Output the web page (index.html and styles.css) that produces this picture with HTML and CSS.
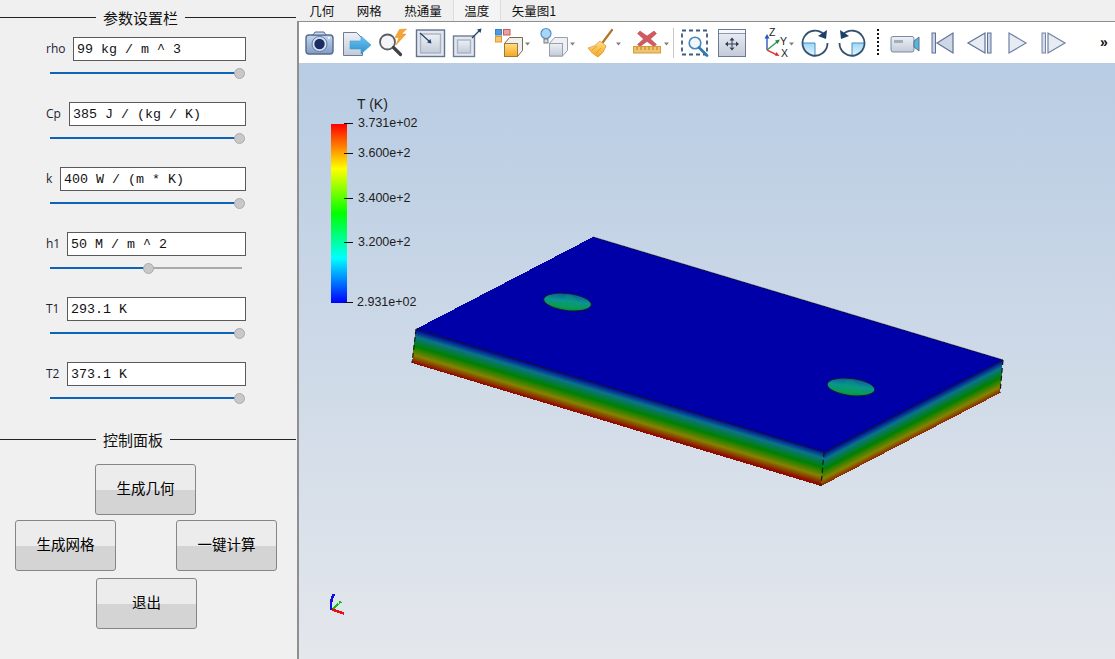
FILE: index.html
```html
<!DOCTYPE html>
<html lang="zh">
<head>
<meta charset="utf-8">
<title>参数设置</title>
<link rel="stylesheet" href="styles.css">
</head>
<body>
<div class="app">
  <aside class="panel">
    <div class="group-title"><span class="rule rule-start"></span><span>参数设置栏</span><span class="rule"></span></div>
    <div class="params">
      <div class="param">
        <div class="field"><label class="lbl lbl-rho">rho</label><div class="input">99 kg / m ^ 3</div></div>
        <div class="slider"><div class="fill" style="width:189px"></div><div class="knob" style="left:184px"></div></div>
      </div>
      <div class="param">
        <div class="field"><label class="lbl lbl-cp">Cp</label><div class="input">385 J / (kg / K)</div></div>
        <div class="slider"><div class="fill" style="width:189px"></div><div class="knob" style="left:184px"></div></div>
      </div>
      <div class="param">
        <div class="field"><label class="lbl lbl-k">k</label><div class="input">400 W / (m * K)</div></div>
        <div class="slider"><div class="fill" style="width:189px"></div><div class="knob" style="left:184px"></div></div>
      </div>
      <div class="param">
        <div class="field"><label class="lbl lbl-t">h1</label><div class="input">50 M / m ^ 2</div></div>
        <div class="slider"><div class="fill" style="width:99px"></div><div class="knob" style="left:93px"></div></div>
      </div>
      <div class="param">
        <div class="field"><label class="lbl lbl-t">T1</label><div class="input">293.1 K</div></div>
        <div class="slider"><div class="fill" style="width:189px"></div><div class="knob" style="left:184px"></div></div>
      </div>
      <div class="param">
        <div class="field"><label class="lbl lbl-t">T2</label><div class="input">373.1 K</div></div>
        <div class="slider"><div class="fill" style="width:189px"></div><div class="knob" style="left:184px"></div></div>
      </div>
    </div>
    <div class="group-title second"><span class="rule rule-start"></span><span>控制面板</span><span class="rule"></span></div>
    <div class="controls">
      <div class="btn-row row-a"><button class="btn">生成几何</button></div>
      <div class="btn-row row-b"><button class="btn">生成网格</button><button class="btn">一键计算</button></div>
      <div class="btn-row row-c"><button class="btn">退出</button></div>
    </div>
  </aside>
  <main class="work">
    <nav class="tabs">
      <span class="tab">几何</span><span class="tab">网格</span><span class="tab">热通量</span><span class="tab active">温度</span><span class="tab">矢量图1</span>
    </nav>
    <div class="side">
      <div class="toolbar">
        <svg width="41" height="41" viewBox="299 22 41 41">
          <defs>
            <linearGradient id="gFrame" x1="0" y1="0" x2="0" y2="1"><stop offset="0" stop-color="#eef1f5"/><stop offset="1" stop-color="#c3cbd8"/></linearGradient>
            <linearGradient id="gCam" x1="0" y1="0" x2="0" y2="1"><stop offset="0" stop-color="#c3d6ee"/><stop offset="1" stop-color="#7f9cc6"/></linearGradient>
            <linearGradient id="gArrow" x1="0" y1="0" x2="0" y2="1"><stop offset="0" stop-color="#6fc4ee"/><stop offset="1" stop-color="#2b8fd0"/></linearGradient>
            <linearGradient id="gOrange" x1="0" y1="0" x2="0" y2="1"><stop offset="0" stop-color="#ffdf85"/><stop offset="1" stop-color="#f5a623"/></linearGradient>
            <linearGradient id="gWedge" x1="0" y1="0" x2="0" y2="1"><stop offset="0" stop-color="#9fd6f5"/><stop offset="1" stop-color="#e2f3fc"/></linearGradient>
          </defs>
          <rect x="306" y="35" width="27" height="19" rx="3" fill="url(#gCam)" stroke="#56698f" stroke-width="1.4"/>
          <path d="M313 35l2-3h9l2 3z" fill="#c3d6ee" stroke="#56698f"/>
          <circle cx="319.5" cy="44" r="7.5" fill="#d7e3f2" stroke="#64799f"/>
          <circle cx="319.5" cy="44" r="5.2" fill="#1c2d63"/>
          <circle cx="329" cy="38" r="1" fill="#fff"/>
        </svg>
        <svg width="35" height="41" viewBox="340 22 35 41">
          <path d="M343.500 32.500h13l6 6v17h-19z" fill="url(#gFrame)" stroke="#6d7b97"/>
          <path d="M350 41h11v-5l10 9-10 9v-5h-11z" fill="url(#gArrow)" stroke="#3d9fd8" stroke-width=".6"/>
        </svg>
        <svg width="37" height="41" viewBox="375 22 37 41">
          <circle cx="387.500" cy="42" r="7.500" fill="#f3f5f8" stroke="#5b5f66" stroke-width="1.800"/>
          <path d="M393.500 47.500l7 7" stroke="#3f4348" stroke-width="3.200" stroke-linecap="round"/>
          <path d="M406.500 29l-7 .5-4.500 8h4l-3 7.500 10-11h-4.500z" fill="#f5a533" stroke="#e68a1c" stroke-width=".5"/>
        </svg>
        <svg width="37" height="41" viewBox="412 22 37 41">
          <rect x="416.500" y="30" width="28" height="26.500" fill="#e3e7ee" stroke="#62738f" stroke-width="1.400"/>
          <rect x="420.500" y="34" width="20" height="19" fill="url(#gFrame)" stroke="#a9b3c3" stroke-width="1.400"/>
          <path d="M420 33l10 9" stroke="#25406f" stroke-width="1.200"/>
          <path d="M431.500 43.500l-4.500-1 3.500-3.500z" fill="#25406f"/>
        </svg>
        <svg width="41" height="41" viewBox="449 22 41 41">
          <rect x="453.500" y="36" width="21" height="20.500" fill="#e3e7ee" stroke="#6d7d99" stroke-width="1.400"/>
          <rect x="457.500" y="40" width="13" height="13" fill="url(#gFrame)" stroke="#a9b3c3" stroke-width="1.400"/>
          <path d="M472 38l7-7" stroke="#25406f" stroke-width="1.200"/>
          <path d="M481.500 28.500l-1 4.500-3.500-3.500z" fill="#25406f"/>
        </svg>
        <svg width="47" height="41" viewBox="490 22 47 41">
          <rect x="495.500" y="29.500" width="6" height="5.500" fill="#4b9be0" stroke="#3c7fc0"/>
          <rect x="503.500" y="29.500" width="6.500" height="5.500" fill="#e9a0a0" stroke="#c45b5b"/>
          <rect x="495.500" y="36.500" width="6" height="5.500" fill="#f6c66d" stroke="#e09a2d"/>
          <path d="M504.500 43.500l5-6h13v13l-5 6h-13z" fill="#f0f0f0" stroke="#7d6a4e"/>
          <rect x="504.500" y="43.500" width="13" height="13" fill="url(#gOrange)" stroke="#9c7a3a"/>
          <path d="M525 42.500h5l-2.500 3z" fill="#7f7f7f"/>
        </svg>
        <svg width="47" height="41" viewBox="537 22 47 41">
          <circle cx="546" cy="33.500" r="5" fill="#a8d7f5" stroke="#4d8fc7" stroke-width="1.200"/>
          <rect x="544" y="39" width="4" height="4" fill="#dcdcdc" stroke="#777"/>
          <path d="M549.500 43.500l5-6h13v13l-5 5.500h-13z" fill="#eef0f3" stroke="#98a0ad"/>
          <rect x="549.500" y="43.500" width="13" height="12.500" fill="url(#gFrame)" stroke="#98a0ad"/>
          <path d="M570 42.500h5l-2.500 3z" fill="#7f7f7f"/>
        </svg>
        <svg width="44" height="41" viewBox="584 22 44 41">
          <path d="M612 30l-9 12" stroke="#b5742a" stroke-width="2.200" stroke-linecap="round"/>
          <path d="M600 41l6 5q-2 7-8 11-6-3-10-9 7-1 12-7z" fill="url(#gOrange)" stroke="#d59a35" stroke-width=".8"/>
          <path d="M592 50l5-4M596 53l5-5" stroke="#d59a35" stroke-width=".8"/>
          <path d="M616 42.500h5l-2.500 3z" fill="#7f7f7f"/>
        </svg>
        <svg width="42" height="41" viewBox="628 22 42 41">
          <path d="M640 31l7 5 7-5 2.500 2.500-6 5.500 6 5.500-2.500 2-7-5-7 5-2.500-2 6-5.500-6-5.500z" fill="#cf5a5f" stroke="#b54146" stroke-width=".5"/>
          <rect x="633.500" y="46.500" width="27" height="6.500" fill="#f0c46f" stroke="#d3983a"/>
          <path d="M637 47v3M641 47v3M645 47v3M649 47v3M653 47v3M657 47v3" stroke="#b67d2a"/>
          <path d="M664 42.500h5l-2.500 3z" fill="#7f7f7f"/>
        </svg>
        <div class="sep"></div>
        <svg width="37" height="41" viewBox="677 22 37 41">
          <rect x="682" y="30.500" width="25" height="24" fill="none" stroke="#3e5a85" stroke-width="1.800" stroke-dasharray="4 3"/>
          <circle cx="695" cy="43" r="5.800" fill="#eef5fb" stroke="#4a86ba" stroke-width="1.600"/>
          <path d="M699 47.500l8 8" stroke="#2f79b5" stroke-width="2.800" stroke-linecap="round"/>
        </svg>
        <svg width="41" height="41" viewBox="714 22 41 41">
          <rect x="718.500" y="29.500" width="27" height="27" fill="url(#gFrame)" stroke="#6c7a96"/>
          <rect x="719" y="30" width="26" height="3" fill="#f5f7f9"/>
          <path d="M719 33.500h26" stroke="#8e9ab0"/>
          <path d="M732 37.500l-2.500 3h5zM732 50.500l-2.500-3h5zM725 44l3-2.500v5zM739 44l-3-2.500v5z" fill="#2e3c57"/>
          <path d="M732 40v7M728 44h8" stroke="#2e3c57"/>
        </svg>
        <svg width="44" height="41" viewBox="755 22 44 41" class="axis-ico">
          <path d="M767 50v-13" stroke="#3a66c5" stroke-width="1.500"/><path d="M767 34l-2.500 4.500h5z" fill="#2a55b8"/>
          <path d="M767 50l10-8" stroke="#2f9a58" stroke-width="1.500"/><path d="M780 39.500l-5 1 2.500 3.500z" fill="#21894a"/>
          <path d="M767 50l10 5" stroke="#d84a4a" stroke-width="1.500"/><path d="M779.500 56l-4.500-.5 1.500-3.500z" fill="#d42f2f"/>
          <text x="769" y="36">Z</text><text x="780" y="45">Y</text><text x="781" y="57">X</text>
          <path d="M789 42.500h5l-2.500 3z" fill="#7f7f7f"/>
        </svg>
        <svg width="34" height="41" viewBox="799 22 34 41">
          <path d="M802.500 43H815V55.500A12.500 12.500 0 0 1 802.500 43z" fill="url(#gWedge)"/>
          <path d="M815 43v12.500M802.500 43H815" stroke="#3f90c9"/>
          <path d="M824 34.500A12.500 12.500 0 1 0 827.500 43" fill="none" stroke="#33506f" stroke-width="1.800"/>
          <path d="M827 30l-1 9-8-3z" fill="#1f3e66"/>
        </svg>
        <svg width="39" height="41" viewBox="833 22 39 41">
          <path d="M864 43H852V55.500A12.500 12.500 0 0 0 864 43z" fill="url(#gWedge)"/>
          <path d="M852 43v12.500M864 43H852" stroke="#3f90c9"/>
          <path d="M843 34.500A12.500 12.500 0 1 1 839.500 43" fill="none" stroke="#33506f" stroke-width="1.800"/>
          <path d="M840 30l1 9 8-3z" fill="#1f3e66"/>
        </svg>
        <div class="dots"></div>
        <svg width="41" height="41" viewBox="885 22 41 41">
          <rect x="891" y="36.500" width="23" height="15.500" rx="2" fill="url(#gFrame)" stroke="#7a88a3"/>
          <rect x="894" y="40" width="9" height="3" fill="#a4adba"/>
          <path d="M914 41l5-4v14l-5-4z" fill="#58b6dd" stroke="#5d708f"/>
        </svg>
        <svg width="34" height="41" viewBox="926 22 34 41">
          <rect x="932" y="33" width="3.500" height="20" fill="#c9d3e2" stroke="#5f7299"/>
          <path d="M953 33v20l-16-10z" fill="#cfd7e4" stroke="#5f7299" stroke-width="1.200"/>
        </svg>
        <svg width="40" height="41" viewBox="960 22 40 41">
          <path d="M985 33v20l-17-10z" fill="#e7ecf3" stroke="#5f7299" stroke-width="1.200"/>
          <rect x="987.500" y="33" width="3.500" height="20" fill="#c9d3e2" stroke="#5f7299"/>
        </svg>
        <svg width="35" height="41" viewBox="1000 22 35 41">
          <path d="M1009 33v20l17-10z" fill="#e7ecf3" stroke="#6d80a5" stroke-width="1.200"/>
        </svg>
        <svg width="55" height="41" viewBox="1035 22 55 41">
          <rect x="1042" y="33" width="3.500" height="20" fill="#d5dce7" stroke="#7486a8"/>
          <path d="M1048 33v20l17-10z" fill="#e7ecf3" stroke="#6d80a5" stroke-width="1.200"/>
        </svg>
        <span class="more">»</span>
      </div>
      <div class="viewport">
        <svg class="scene" width="816" height="596" viewBox="299 63 816 596">
          <defs>
            <linearGradient id="cbar" x1="0" y1="0" x2="0" y2="1">
              <stop offset="0" stop-color="#ff0000"/><stop offset=".25" stop-color="#ffff00"/><stop offset=".5" stop-color="#00ff00"/><stop offset=".75" stop-color="#00ffff"/><stop offset="1" stop-color="#0000ff"/>
            </linearGradient>
            <linearGradient id="sideL" gradientUnits="userSpaceOnUse" x1="620" y1="390" x2="610.600" y2="421.600">
              <stop offset="0" stop-color="#00009c"/><stop offset=".22" stop-color="#0a7488"/><stop offset=".5" stop-color="#008000"/><stop offset=".77" stop-color="#868200"/><stop offset="1" stop-color="#8e0c00"/>
            </linearGradient>
            <linearGradient id="sideR" gradientUnits="userSpaceOnUse" x1="913" y1="406" x2="926.900" y2="432.800">
              <stop offset="0" stop-color="#00009c"/><stop offset=".22" stop-color="#0a7488"/><stop offset=".5" stop-color="#008000"/><stop offset=".77" stop-color="#868200"/><stop offset="1" stop-color="#8e0c00"/>
            </linearGradient>
            <linearGradient id="hole" x1="0" y1="0" x2="0" y2="1">
              <stop offset="0" stop-color="#0b5a9c"/><stop offset=".45" stop-color="#0a9590"/><stop offset=".8" stop-color="#0a9a50"/><stop offset="1" stop-color="#0a8a22"/>
            </linearGradient>
          </defs>
          <rect x="331" y="124" width="16" height="179" fill="url(#cbar)"/>
          <path d="M344 123.500h9M344 153.500h9M344 198.500h9M344 242.500h9M344 302.500h9" stroke="#111" stroke-width="1"/>
          <text class="leg-title" x="357" y="109">T (K)</text>
          <text class="leg" x="358" y="127">3.731e+02</text>
          <text class="leg" x="358" y="157">3.600e+2</text>
          <text class="leg" x="358" y="202">3.400e+2</text>
          <text class="leg" x="358" y="246">3.200e+2</text>
          <text class="leg" x="357" y="306">2.931e+02</text>

          <g class="mesh">
            <path d="M416 329L824 452L821 486L412 363z" fill="url(#sideL)"/>
            <path d="M824 452L1003 360L1000 393L821 486z" fill="url(#sideR)"/>
            <path d="M416 329L593 237L1003 360L824 452z" fill="#0000a8"/>
          </g>
          <path d="M416 329L824 452L1003 360" fill="none" stroke="#14142e" stroke-width="1"/>
          <path d="M593 237L1003 360" fill="none" stroke="#10103a" stroke-width=".8"/>
          <path d="M416 329L412 363M824 452L821 486M1003 360L1000 393" fill="none" stroke="#161616" stroke-width="1.200" stroke-dasharray="5 3"/>
          <ellipse cx="567.500" cy="302" rx="24" ry="8.500" transform="rotate(7 567.500 302)" fill="url(#hole)" stroke="#12163a" stroke-width="1"/>
          <path d="M566 295l7 .5 9 12-13 3-11-3z" fill="#0aa070" opacity=".35"/>
          <ellipse cx="851" cy="387" rx="24" ry="8.500" transform="rotate(7 851 387)" fill="url(#hole)" stroke="#12163a" stroke-width="1"/>
          <path d="M847 380l7 .5 10 12-13 3-13-4z" fill="#0aa070" opacity=".35"/>

          <g class="mesh">
            <path d="M331 610Q330 601 334 594" fill="none" stroke="#1212e0" stroke-width="2.500"/>
            <path d="M332 610L338 604M339 603l2-1.500" fill="none" stroke="#10c010" stroke-width="2.500"/>
            <path d="M332 609.500L344 613.500" fill="none" stroke="#e81010" stroke-width="2.500"/>
          </g>
        </svg>
      </div>
    </div>
  </main>
</div>
</body>
</html>
```
FILE: styles.css
```css
* { box-sizing: border-box; }
html, body { margin: 0; height: 100%; overflow: hidden; }
body {
  background: #f0f0f0;
  color: #000;
  font-family: "Noto Sans CJK SC", "Liberation Sans", sans-serif;
}
.app { display: flex; width: 1115px; height: 659px; }

.panel { width: 297px; flex: none; padding-top: 7px; }
.group-title {
  display: flex;
  align-items: center;
  gap: 7px;
  height: 21px;
  font-size: 15px;
  line-height: 21px;
  color: #111;
}
.group-title.second { margin-top: 25px; }
.rule { flex: 1; height: 1px; background: #222; margin-right: 1px; }
.rule-start { flex: none; width: 96px; margin-right: 0; }

.params { margin-top: 9px; display: flex; flex-direction: column; gap: 23px; }
.field { display: flex; align-items: center; padding: 0 51px 0 46px; height: 24px; }
.lbl {
  font-family: "Open Sans", "Liberation Sans", sans-serif;
  font-size: 12px;
  color: #1c2330;
  flex: none;
  padding-bottom: 2px;
}
.lbl-rho { width: 27px; }
.lbl-cp { width: 23px; }
.lbl-k { width: 14px; }
.lbl-t { width: 21px; }
.input {
  flex: 1;
  height: 24px;
  background: #fff;
  border: 1px solid #5a5a5a;
  padding-left: 3px;
  font-family: "Liberation Mono", monospace;
  font-size: 13.33px;
  line-height: 24px;
  white-space: pre;
  color: #111;
}
.slider {
  position: relative;
  margin: 7px 0 0 50px;
  width: 192px;
  height: 11px;
}
.slider::before {
  content: "";
  position: absolute;
  left: 0; right: 0; top: 4px;
  height: 2px;
  background: #a9a9a9;
}
.fill {
  position: absolute;
  left: 0; top: 4px;
  height: 2px;
  background: #0b64b8;
}
.knob {
  position: absolute;
  top: 0;
  width: 11px;
  height: 11px;
  border-radius: 50%;
  background: #c8c8c8;
  border: 1px solid #ababab;
}

.controls { margin-top: 14px; }
.btn-row { display: flex; }
.row-a { padding-left: 95px; }
.row-b { justify-content: space-between; padding: 0 20px 0 15px; margin-top: 5px; }
.row-c { padding-left: 96px; margin-top: 7px; }
.btn {
  width: 101px;
  height: 51px;
  padding: 0 0 4px;
  border: 1px solid #868686;
  border-radius: 3px;
  background: linear-gradient(to bottom, #ececec 0, #ececec 51%, #d4d4d4 51%, #d4d4d4 100%);
  font-family: "Noto Sans CJK SC", sans-serif;
  font-size: 14.5px;
  color: #000;
}

.work { flex: 1; min-width: 0; display: flex; flex-direction: column; }
.tabs { display: flex; height: 21px; padding-left: 1px; font-size: 12.5px; line-height: 21px; color: #111; }
.tab { padding: 0 11.25px; white-space: nowrap; }
.tab.active {
  background: #f4f4f4;
  border-left: 1px solid #dcdcdc;
  border-right: 1px solid #dcdcdc;
  padding: 0 10.25px;
}
.side {
  flex: 1;
  min-height: 0;
  display: flex;
  flex-direction: column;
  border-left: 2px solid #8f8f8f;
  border-top: 1px solid #8f8f8f;
}
.toolbar { display: flex; align-items: stretch; height: 41px; background: #fff; }
.toolbar svg { display: block; flex: none; }
.sep { width: 7px; flex: none; }
.sep::before { content: ""; display: block; width: 1px; height: 30px; margin: 6px 0 0 3px; background: #c9c9c9; }
.dots { width: 13px; flex: none; }
.dots::before { content: ""; display: block; width: 0; height: 26px; margin: 7px 0 0 5px; border-left: 2px dotted #111; }
.more { font-family: "Liberation Sans", sans-serif; font-size: 14px; font-weight: 700; line-height: 41px; padding-left: 10px; color: #111; }
.axis-ico text { font-family: "Liberation Sans", sans-serif; font-size: 10.5px; fill: #222; }

.viewport { flex: 1; min-height: 0; background: linear-gradient(to bottom, #b8cce3, #e4e7ec); }
.scene { display: block; }
.mesh { shape-rendering: crispEdges; }
.leg { font-family: "Liberation Sans", sans-serif; font-size: 12.5px; fill: #1d1d1d; }
.leg-title { font-family: "Liberation Sans", sans-serif; font-size: 14px; fill: #1d1d1d; }
```
